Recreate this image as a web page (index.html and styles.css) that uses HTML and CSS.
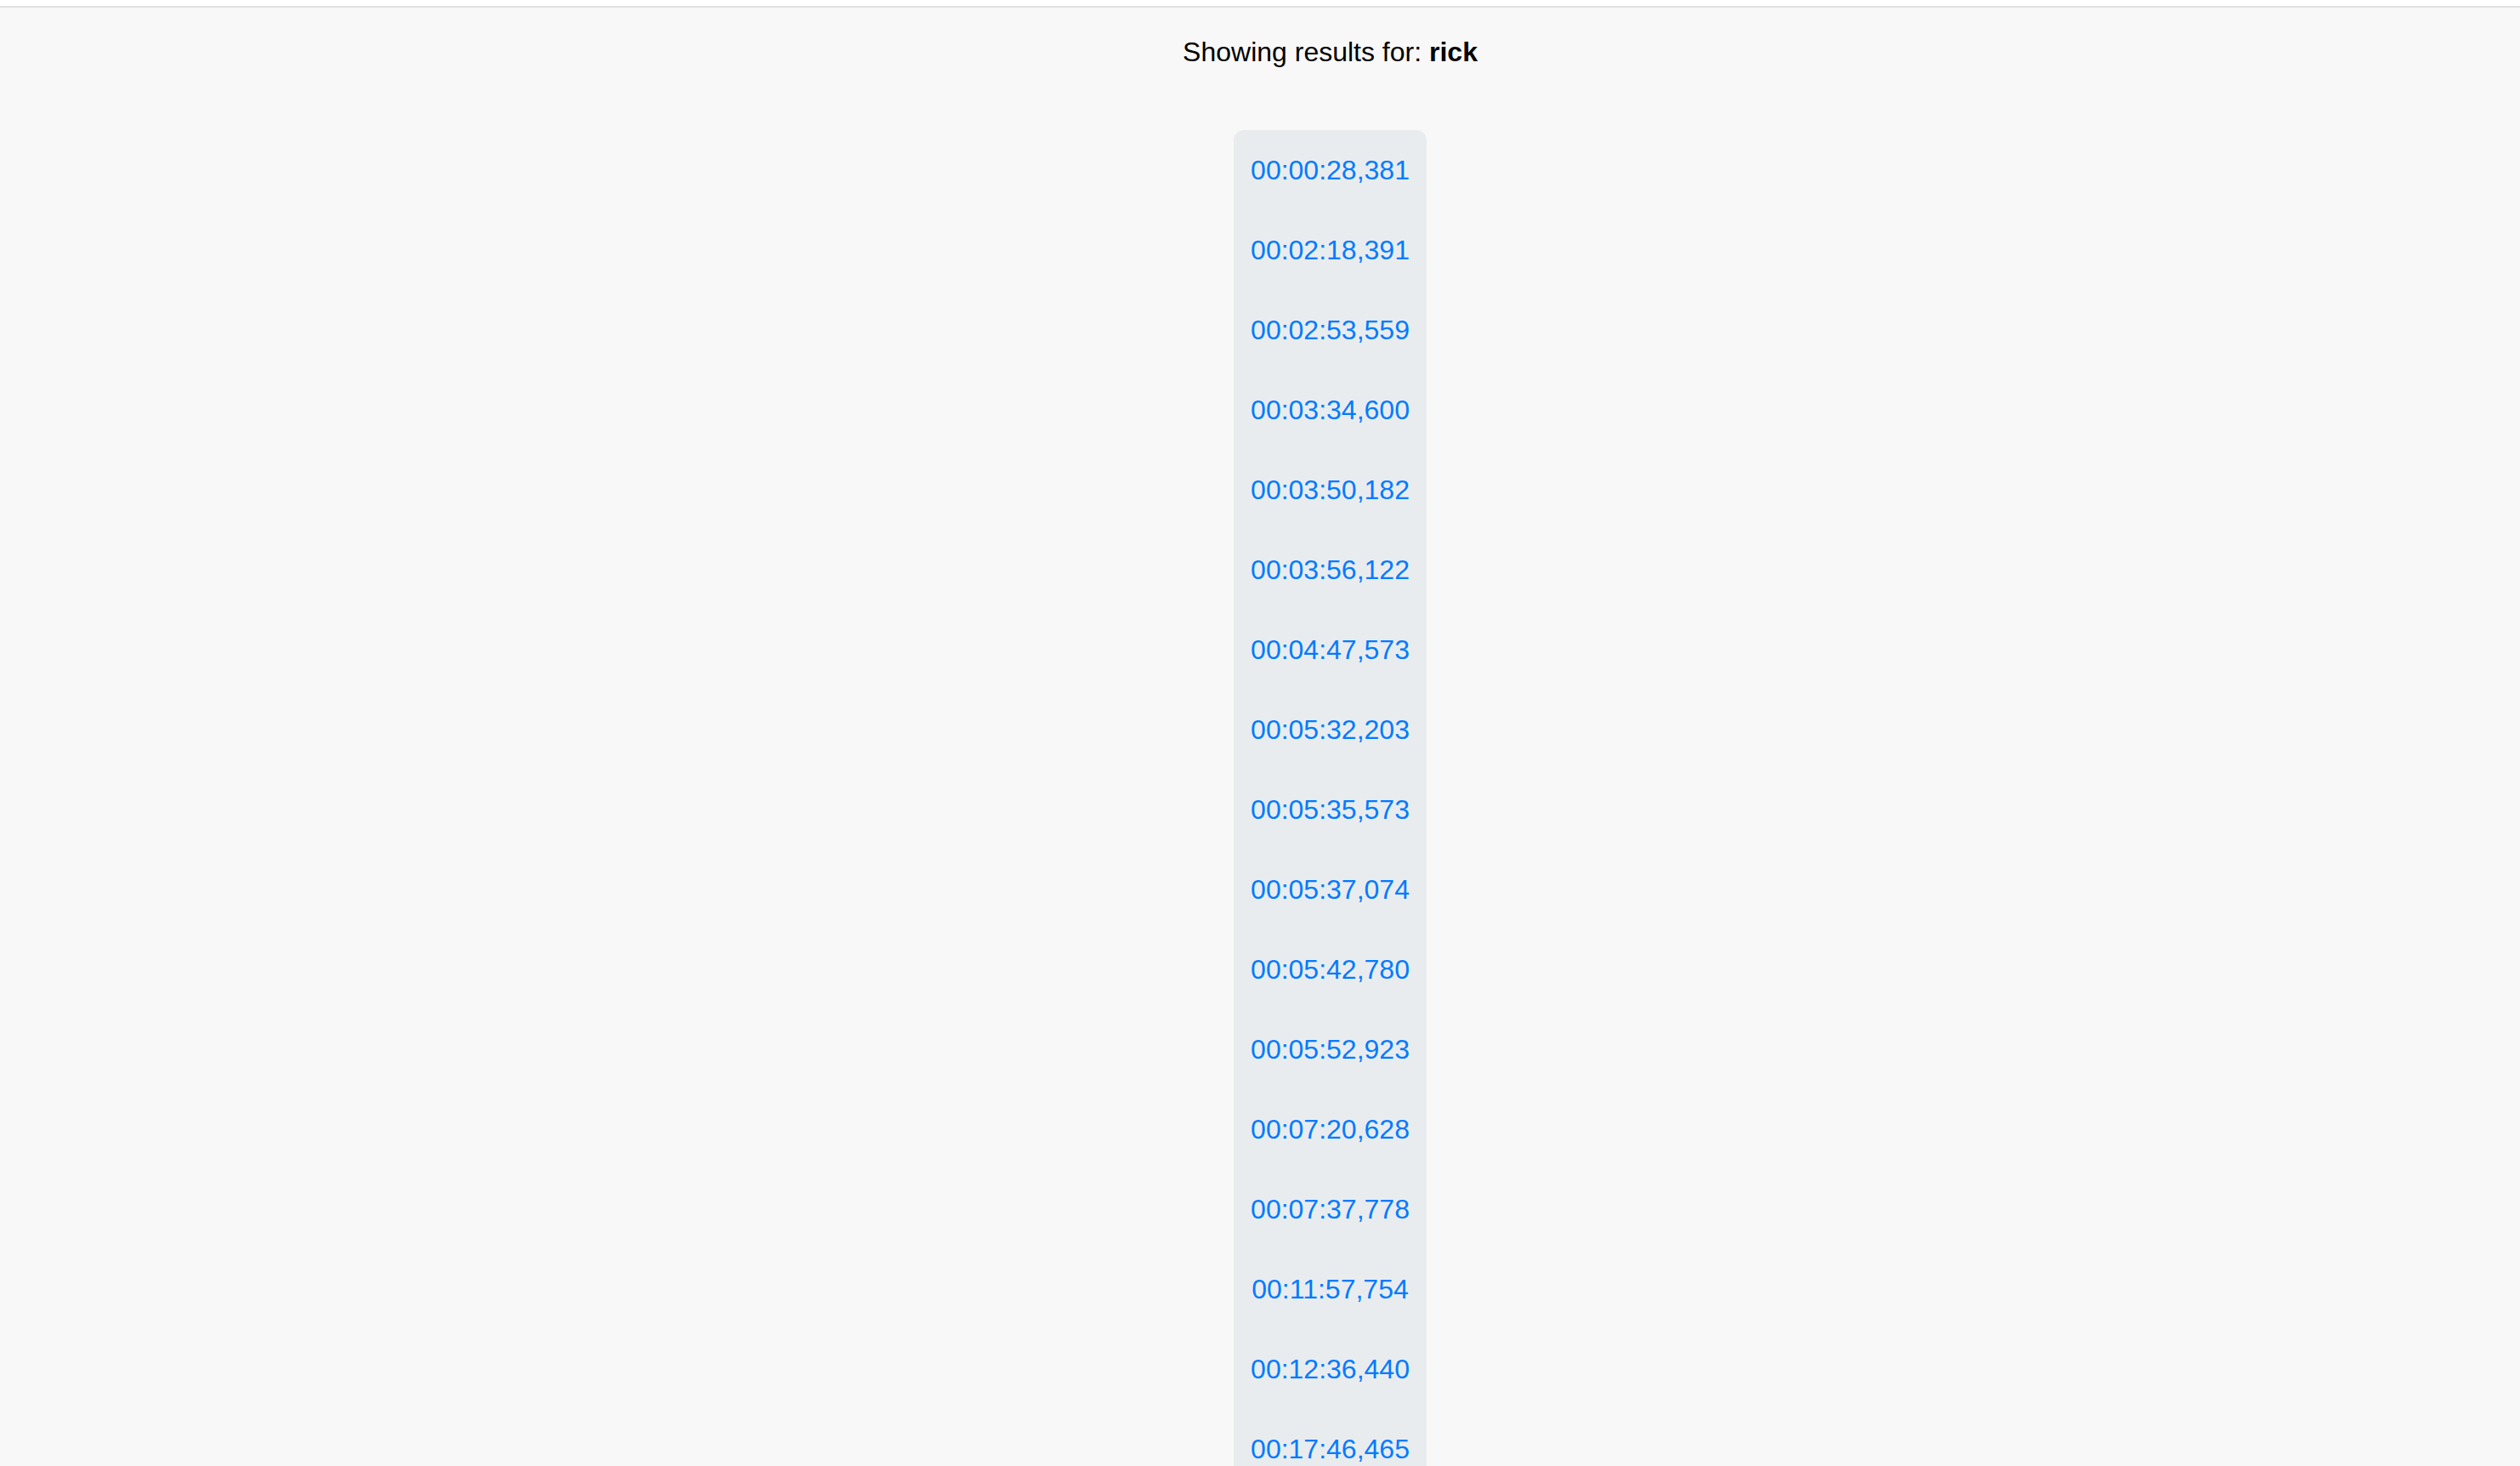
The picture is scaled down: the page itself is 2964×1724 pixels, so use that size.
FILE: index.html
```html
<!DOCTYPE html>
<html>
<head>
<meta charset="utf-8">
<link rel="stylesheet" href="styles.css">
</head>
<body>
<div class="topbar"></div>
<main class="content">
  <p class="heading">Showing results for: <strong>rick</strong></p>
  <ul class="results">
    <li><a href="#">00:00:28,381</a></li>
    <li><a href="#">00:02:18,391</a></li>
    <li><a href="#">00:02:53,559</a></li>
    <li><a href="#">00:03:34,600</a></li>
    <li><a href="#">00:03:50,182</a></li>
    <li><a href="#">00:03:56,122</a></li>
    <li><a href="#">00:04:47,573</a></li>
    <li><a href="#">00:05:32,203</a></li>
    <li><a href="#">00:05:35,573</a></li>
    <li><a href="#">00:05:37,074</a></li>
    <li><a href="#">00:05:42,780</a></li>
    <li><a href="#">00:05:52,923</a></li>
    <li><a href="#">00:07:20,628</a></li>
    <li><a href="#">00:07:37,778</a></li>
    <li><a href="#">00:11:57,754</a></li>
    <li><a href="#">00:12:36,440</a></li>
    <li><a href="#">00:17:46,465</a></li>
    <li><a href="#">00:18:02,117</a></li>
    <li><a href="#">00:19:31,008</a></li>
  </ul>
</main>
</body>
</html>
```

FILE: styles.css
```css
html, body {
  margin: 0;
  padding: 0;
}
body {
  background: #f8f8f8;
  font-family: "Liberation Sans", Arial, sans-serif;
  color: #000;
}
.topbar {
  height: 7px;
  background: #ffffff;
  border-bottom: 2px solid #e0e0e0;
}
.content {
  padding-left: 165px;
  display: flex;
  flex-direction: column;
  align-items: center;
}
.heading {
  margin: 34px 0 0 0;
  font-size: 32px;
  line-height: normal;
}
.heading strong {
  font-weight: bold;
}
.results {
  list-style: none;
  margin: 73px 0 0 0;
  padding: 0 20px;
  background: #e9ecef;
  border-radius: 12px;
}
.results li {
  height: 94px;
  display: flex;
  align-items: center;
  justify-content: center;
}
.results a {
  color: #007bff;
  text-decoration: none;
  font-size: 32px;
  line-height: normal;
}
```
